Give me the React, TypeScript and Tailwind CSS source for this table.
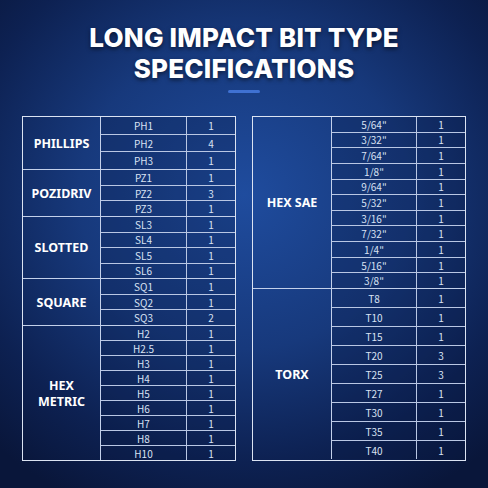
import React from "react";

type Group = { label: string[]; h: number; rows: [string, string][] };

const left: Group[] = [
  { label: ["PHILLIPS"], h: 52, rows: [["PH1", "1"], ["PH2", "4"], ["PH3", "1"]] },
  { label: ["POZIDRIV"], h: 47, rows: [["PZ1", "1"], ["PZ2", "3"], ["PZ3", "1"]] },
  { label: ["SLOTTED"], h: 62, rows: [["SL3", "1"], ["SL4", "1"], ["SL5", "1"], ["SL6", "1"]] },
  { label: ["SQUARE"], h: 47, rows: [["SQ1", "1"], ["SQ2", "1"], ["SQ3", "2"]] },
  {
    label: ["HEX", "METRIC"],
    h: 135,
    rows: [["H2", "1"], ["H2.5", "1"], ["H3", "1"], ["H4", "1"], ["H5", "1"], ["H6", "1"], ["H7", "1"], ["H8", "1"], ["H10", "1"]],
  },
];

const right: Group[] = [
  {
    label: ["HEX SAE"],
    h: 171,
    rows: [
      ["5/64\"", "1"], ["3/32\"", "1"], ["7/64\"", "1"], ["1/8\"", "1"], ["9/64\"", "1"], ["5/32\"", "1"],
      ["3/16\"", "1"], ["7/32\"", "1"], ["1/4\"", "1"], ["5/16\"", "1"], ["3/8\"", "1"],
    ],
  },
  {
    label: ["TORX"],
    h: 171,
    rows: [["T8", "1"], ["T10", "1"], ["T15", "1"], ["T20", "3"], ["T25", "3"], ["T27", "1"], ["T30", "1"], ["T35", "1"], ["T40", "1"]],
  },
];

function Table({ groups, catW, sizeW }: { groups: Group[]; catW: string; sizeW: string }) {
  return (
    <div className="flex w-[214px] flex-col border border-[#dbe3f2]">
      {groups.map((g, gi) => (
        <div key={gi} className={`flex ${gi > 0 ? "border-t border-[#c3d0ea]" : ""}`} style={{ height: g.h }}>
          <div
            className={`${catW} flex shrink-0 flex-col items-center justify-center gap-[1px] border-r border-[#c3d0ea] text-center text-[12.5px] font-bold leading-[15px] text-white`}
          >
            {g.label.map((l) => (
              <span key={l}>{l}</span>
            ))}
          </div>
          <div
            className="flex min-h-0 flex-1 flex-col bg-[#06173f]/25"
            style={{ fontFamily: "'Noto Sans CJK SC', 'Noto Sans', sans-serif" }}
          >
            {g.rows.map(([s, q], ri) => (
              <div
                key={ri}
                className={`flex min-h-0 flex-1 basis-0 items-center leading-[10px] ${ri > 0 ? "border-t border-[#b9c7e4]" : ""}`}
              >
                <div className={`${sizeW} flex h-full shrink-0 items-center justify-center border-r border-[#b9c7e4] pt-[1px] text-[10px] text-[#d9e2f3]`}>
                  {s}
                </div>
                <div className="flex h-full flex-1 items-center justify-center pt-[1px] text-[10px] text-[#d9e2f3]">{q}</div>
              </div>
            ))}
          </div>
        </div>
      ))}
    </div>
  );
}

export default function App() {
  return (
    <div
      className="flex h-[488px] w-[488px] flex-col items-center bg-[radial-gradient(ellipse_75%_70%_at_50%_40%,#1f4c9e_0%,#17397c_45%,#0d2152_78%,#09163a_100%)]"
      style={{ fontFamily: "'Noto Sans', 'Open Sans', sans-serif" }}
    >
      <h1
        className="pt-[22px] text-center text-[26px] font-extrabold leading-[31px] tracking-[0.2px] text-white [text-shadow:0_2px_4px_rgba(0,0,0,0.55)]"
        style={{ fontFamily: "Inter, 'Noto Sans', sans-serif" }}
      >
        LONG IMPACT BIT TYPE
        <br />
        SPECIFICATIONS
      </h1>
      <div className="mt-[6px] h-[3px] w-[32px] rounded-full bg-[#3f71d2]" />
      <div className="mt-[23px] flex gap-[16px]">
        <Table groups={left} catW="w-[78px]" sizeW="w-[86px]" />
        <Table groups={right} catW="w-[79px]" sizeW="w-[85px]" />
      </div>
    </div>
  );
}
